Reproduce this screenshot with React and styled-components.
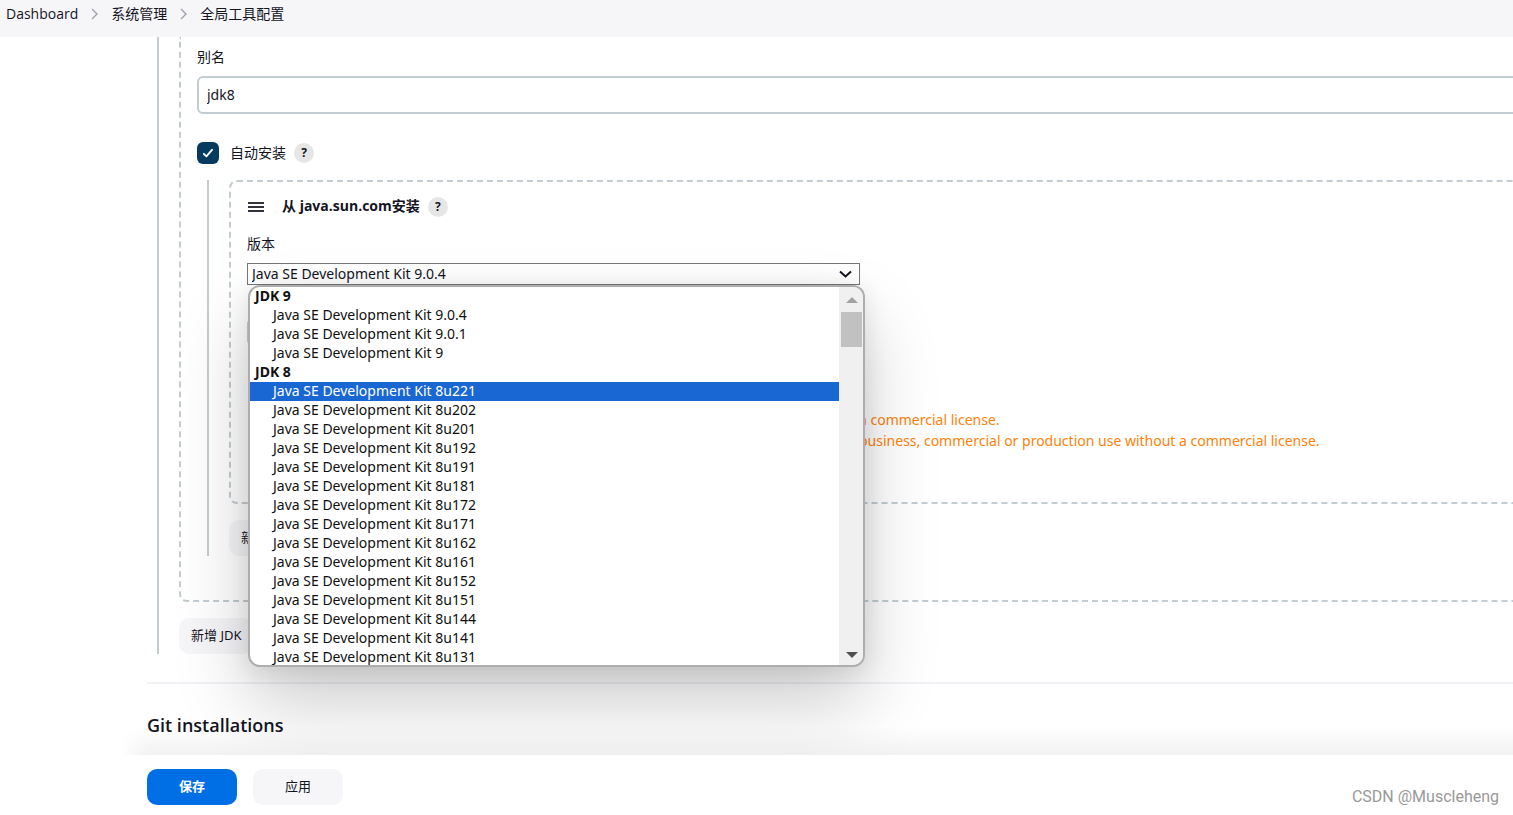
import React from "react";
import styled, { createGlobalStyle, css } from "styled-components";

const bodyFont = `"Noto Sans", "Noto Sans CJK SC", sans-serif`;
const compactFont = `"Open Sans", "Noto Sans CJK SC", sans-serif`;

const GlobalStyle = createGlobalStyle`
  *, *::before, *::after { box-sizing: border-box; }
  body {
    margin: 0;
    background: #fff;
    color: #14141f;
    font: 14px/20px ${bodyFont};
  }
  button, input, select { font: inherit; color: inherit; }
`;

const Page = styled.div`
  display: flex;
  flex-direction: column;
  height: 100vh;
  overflow: hidden;
  position: relative;
`;

const BreadcrumbBar = styled.nav`
  flex: none;
  height: 37px;
  padding: 4px 6px;
  background: #f6f6f9;
  font-family: ${compactFont};
`;

const BreadcrumbList = styled.ol`
  display: flex;
  align-items: center;
  gap: 13px;
  margin: 0;
  padding: 0;
  list-style: none;
`;

const Crumb = styled.li`
  display: flex;
  align-items: center;
  gap: 13px;
  a { color: inherit; text-decoration: none; }
`;

const Content = styled.main`
  flex: 1;
  min-height: 0;
  margin-left: 147px;
  overflow: visible;
`;

const Rail = styled.div`
  border-left: 2px solid #c3ccd1;
  margin-left: 10px;
  padding-left: 20px;
  margin-right: -40px;
`;

const NestedRail = styled(Rail)`
  margin-right: 0;
  margin-top: 16px;
`;

const DashedBox = styled.div`
  border: 2px dashed #c3ccd1;
  border-radius: 8px;
  padding: 16px;
  ${(p) =>
    p.$openTop &&
    css`
      border-top: none;
      border-top-left-radius: 0;
      border-top-right-radius: 0;
      padding: 10px 16px 44px;
    `}
`;

const InstallerBox = styled(DashedBox)`
  height: 324px;
  padding: 14px 16px;
`;

const Label = styled.label`
  display: block;
`;

const TextInput = styled.input`
  display: block;
  width: 100%;
  height: 38px;
  margin-top: 9px;
  padding: 0 8px 2px;
  border: 2px solid #c3ccd1;
  border-radius: 6px;
  background: #fff;
`;

const CheckRow = styled.div`
  display: flex;
  align-items: center;
  gap: 8px;
  height: 22px;
  margin-top: 28px;
`;

const CheckLabel = styled.label`
  display: flex;
  align-items: center;
  gap: 11px;
`;

const CheckWrap = styled.span`
  display: grid;
  width: 22px;
  height: 22px;
  > * { grid-area: 1 / 1; }
  svg { pointer-events: none; }
`;

const CheckInput = styled.input`
  appearance: none;
  width: 22px;
  height: 22px;
  margin: 0;
  border-radius: 6px;
  background: #063b60;
`;

const HelpButton = styled.button`
  display: grid;
  place-items: center;
  width: 20px;
  height: 20px;
  padding: 0;
  border: none;
  border-radius: 50%;
  background: #e6e6e6;
  font-size: 12px;
  line-height: 20px;
  font-weight: 700;
`;

const InstallerHeader = styled.div`
  display: flex;
  align-items: center;
  gap: 8px;
  height: 22px;
  margin-bottom: 16px;
  svg { margin: 0 10px 0 1px; }
`;

const InstallerTitle = styled.strong`
  padding-bottom: 2px;
  font-family: ${compactFont};
  font-weight: 700;
`;

const SelectWrap = styled.div`
  position: relative;
  width: 613px;
  margin-top: 9px;
  > svg { position: absolute; right: 8px; top: 6px; pointer-events: none; }
`;

const VersionSelect = styled.select`
  appearance: none;
  display: block;
  width: 100%;
  height: 22px;
  padding: 0 4px;
  border: 1px solid #767676;
  border-radius: 0;
  background: #fff;
  line-height: 20px;
`;

const Popup = styled.div`
  position: absolute;
  z-index: 5;
  top: 22px;
  left: 1px;
  display: flex;
  width: 617px;
  height: 382px;
  overflow: hidden;
  border: 2px solid #adadad;
  border-radius: 12px;
  background: #fff;
  box-shadow:
    0 36px 76px rgba(0, 0, 0, 0.2),
    0 4px 24px rgba(0, 0, 0, 0.1);
`;

const OptionList = styled.ul`
  flex: 1;
  margin: 0;
  padding: 0;
  list-style: none;
  line-height: 17px;
  color: #101010;
  overflow: hidden;
  ul { margin: 0; padding: 0; list-style: none; }
`;

const GroupName = styled.div`
  height: 19px;
  padding-left: 5px;
  font-weight: 700;
`;

const Option = styled.li`
  height: 19px;
  padding-left: 23px;
  background: ${(p) => (p.$active ? "#1967d2" : "transparent")};
  color: ${(p) => (p.$active ? "#fff" : "inherit")};
`;

const ScrollTrack = styled.div`
  display: flex;
  flex-direction: column;
  align-items: center;
  width: 24px;
  padding: 10px 1px 7px 2px;
  background: #f0f0f0;
`;

const ScrollThumb = styled.div`
  width: 21px;
  height: 35px;
  margin: 9px 0 auto;
  background: #c1c1c1;
`;

const UserField = styled.input`
  display: block;
  width: 320px;
  height: 28px;
  margin-top: 33px;
  border: 2px solid #c3ccd1;
  border-radius: 6px;
  background: #fff;
`;

const Warnings = styled.div`
  margin-top: 63px;
  padding-left: 612px;
  color: #fe820a;
  line-height: 21px;
  white-space: nowrap;
  p { margin: 0; }
`;

const SoftButton = styled.button`
  height: 36px;
  min-width: ${(p) => (p.$wide ? "90px" : "0")};
  padding: 0 12px 2px;
  border: none;
  border-radius: 10px;
  background: ${(p) => (p.$primary ? "#006fe6" : "#f6f6f9")};
  color: ${(p) => (p.$primary ? "#fff" : "inherit")};
  font-size: 13px;
  font-weight: ${(p) => (p.$primary ? 700 : 400)};
`;

const AddRow = styled.div`
  display: flex;
  padding-top: 16px;
`;

const Divider = styled.hr`
  height: 2px;
  margin: 28px 0 30px;
  border: none;
  background: #f1f1f6;
`;

const SectionTitle = styled.h2`
  margin: 0;
  font-family: ${compactFont};
  font-size: 18px;
  line-height: 22px;
  font-weight: 600;
`;

const ActionBar = styled.footer`
  position: relative;
  z-index: 6;
  flex: none;
  display: flex;
  gap: 16px;
  height: 60px;
  padding: 14px 147px;
  background: rgba(255, 255, 255, 0.9);
  &::before {
    content: "";
    position: absolute;
    left: 120px;
    right: 0;
    bottom: 100%;
    height: 28px;
    background: linear-gradient(to bottom, transparent, rgba(0, 0, 0, 0.05));
    mask-image: linear-gradient(to right, transparent, #000 28px);
    pointer-events: none;
  }
`;

const Watermark = styled.span`
  position: absolute;
  z-index: 7;
  right: 14px;
  bottom: 8px;
  font: 16px/20px Roboto, sans-serif;
  color: #999;
`;

const Chevron = () => (
  <svg width="7" height="12" viewBox="0 0 7 12" fill="none" stroke="#a0a0ad" strokeWidth="1.4" aria-hidden="true">
    <path d="M1 1l5 5-5 5" />
  </svg>
);

const groups = [
  { name: "JDK 9", versions: ["9.0.4", "9.0.1", "9"] },
  {
    name: "JDK 8",
    versions: [
      "8u221", "8u202", "8u201", "8u192", "8u191", "8u181", "8u172", "8u171",
      "8u162", "8u161", "8u152", "8u151", "8u144", "8u141", "8u131",
    ],
  },
];

const crumbs = ["Dashboard", "系统管理", "全局工具配置"];

function VersionPicker() {
  return (
    <SelectWrap>
      <VersionSelect id="version" defaultValue="9.0.4">
        {groups.map((g) => (
          <optgroup key={g.name} label={g.name}>
            {g.versions.map((v) => (
              <option key={v} value={v}>{`Java SE Development Kit ${v}`}</option>
            ))}
          </optgroup>
        ))}
      </VersionSelect>
      <svg width="13" height="10" viewBox="0 0 13 10" fill="none" stroke="#14141f" strokeWidth="2" aria-hidden="true">
        <path d="M1 2.5l5.5 5 5.5-5" />
      </svg>
      <Popup>
        <OptionList role="listbox" aria-label="版本">
          {groups.map((g) => (
            <li key={g.name} role="group" aria-label={g.name}>
              <GroupName>{g.name}</GroupName>
              <ul role="presentation">
                {g.versions.map((v) => (
                  <Option key={v} role="option" aria-selected={v === "8u221"} $active={v === "8u221"}>
                    {`Java SE Development Kit ${v}`}
                  </Option>
                ))}
              </ul>
            </li>
          ))}
        </OptionList>
        <ScrollTrack aria-hidden="true">
          <svg width="12" height="6"><path d="M0 6L6 0l6 6z" fill="#a3a3a3" /></svg>
          <ScrollThumb />
          <svg width="12" height="6"><path d="M0 0h12L6 6z" fill="#505050" /></svg>
        </ScrollTrack>
      </Popup>
    </SelectWrap>
  );
}

export default function App() {
  return (
    <Page>
      <GlobalStyle />
      <BreadcrumbBar aria-label="Breadcrumb">
        <BreadcrumbList>
          {crumbs.map((c, i) => (
            <Crumb key={c}>
              {i > 0 && <Chevron />}
              <a href="#">{c}</a>
            </Crumb>
          ))}
        </BreadcrumbList>
      </BreadcrumbBar>

      <Content>
        <Rail>
          <DashedBox $openTop>
            <Label htmlFor="alias">别名</Label>
            <TextInput id="alias" defaultValue="jdk8" />
            <CheckRow>
              <CheckLabel>
                <CheckWrap>
                  <CheckInput type="checkbox" defaultChecked />
                  <svg width="22" height="22" viewBox="0 0 22 22" fill="none" stroke="#fff" strokeWidth="1.8" strokeLinecap="round" strokeLinejoin="round" aria-hidden="true">
                    <path d="M6.800 11.800l2.600 2.600 5.600-6.600" />
                  </svg>
                </CheckWrap>
                自动安装
              </CheckLabel>
              <HelpButton type="button">?</HelpButton>
            </CheckRow>
            <NestedRail>
              <InstallerBox>
                <InstallerHeader>
                  <svg width="16" height="10" viewBox="0 0 16 10" fill="#333340" aria-hidden="true">
                    <path d="M0 0h16v2H0zM0 4h16v2H0zM0 8h16v2H0z" />
                  </svg>
                  <InstallerTitle>从 java.sun.com安装</InstallerTitle>
                  <HelpButton type="button">?</HelpButton>
                </InstallerHeader>
                <Label htmlFor="version">版本</Label>
                <VersionPicker />
                <UserField aria-label="Oracle" />
                <Warnings>
                  <p>a commercial license.</p>
                  <p>business, commercial or production use without a commercial license.</p>
                </Warnings>
              </InstallerBox>
              <AddRow>
                <SoftButton type="button">新增</SoftButton>
              </AddRow>
            </NestedRail>
          </DashedBox>
          <AddRow>
            <SoftButton type="button">新增 JDK</SoftButton>
          </AddRow>
        </Rail>
        <Divider />
        <SectionTitle>Git installations</SectionTitle>
      </Content>

      <ActionBar>
        <SoftButton type="submit" $primary $wide>保存</SoftButton>
        <SoftButton type="button" $wide>应用</SoftButton>
      </ActionBar>
      <Watermark>CSDN @Muscleheng</Watermark>
    </Page>
  );
}
